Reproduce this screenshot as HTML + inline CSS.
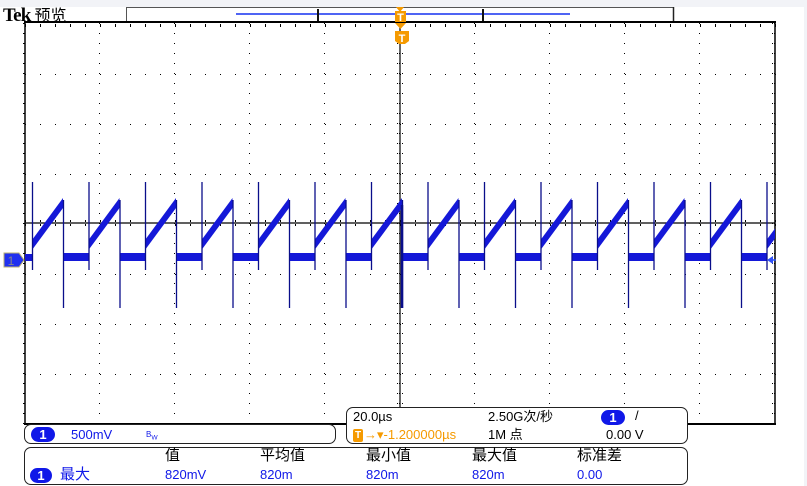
<!DOCTYPE html>
<html><head><meta charset="utf-8"><style>
html,body{margin:0;padding:0;}
body{width:807px;height:486px;background:#fff;position:relative;overflow:hidden;font-family:"Liberation Sans","Noto Sans CJK SC",sans-serif;}
.t{position:absolute;font-size:14px;line-height:16px;white-space:nowrap;}
.box{position:absolute;border:1.5px solid #222;border-radius:7px;background:#fff;box-sizing:border-box;}
.c1{position:absolute;width:24px;height:15px;border-radius:8px;background:#1018e8;color:#fff;font-size:13px;line-height:15px;text-align:center;font-weight:bold;}
</style></head><body>
<div style="position:absolute;left:0;top:0;width:807px;height:7px;background:#f2f3f7"></div>
<div style="position:absolute;left:804px;top:0;width:3px;height:486px;background:#f2f3f7"></div>
<div class="t" style="left:3px;top:4px;font-family:'Liberation Serif','Noto Serif CJK SC',serif;font-size:19px;line-height:20px;font-weight:bold;letter-spacing:-0.8px">Tek <span style="font-weight:normal;font-family:'Noto Sans CJK SC',sans-serif;font-size:16px;letter-spacing:0">预览</span></div>
<svg id="s" width="807" height="486" style="position:absolute;left:0;top:0"></svg>
<div class="box" style="left:24px;top:424px;width:312px;height:20px"></div>
<div class="c1" style="left:31px;top:427px">1</div>
<div class="t" style="left:71px;top:427px;color:#1018e8;font-size:13px">500mV</div>
<div class="t" style="left:146px;top:427px;color:#1018e8;font-size:8px">B<sub>W</sub></div>
<div class="box" style="left:346px;top:407px;width:342px;height:37px"></div>
<div class="t" style="left:353px;top:409px;font-size:13px">20.0µs</div>
<div class="t" style="left:488px;top:409px;font-size:13px">2.50G次/秒</div>
<div class="c1" style="left:601px;top:410px">1</div>
<div class="t" style="left:635px;top:408px;font-size:13px">/</div>
<div style="position:absolute;left:353px;top:429px;width:10px;height:13px;background:#f59a00;border-radius:2px;color:#fff;font-size:10px;line-height:13px;text-align:center;font-weight:bold">T</div>
<div class="t" style="left:364px;top:427px;color:#f59a00;font-size:13px">→▾-1.200000µs</div>
<div class="t" style="left:488px;top:427px;font-size:13px">1M 点</div>
<div class="t" style="left:606px;top:427px;font-size:13px">0.00 V</div>
<div class="box" style="left:24px;top:447px;width:664px;height:38px"></div>
<div class="t" style="left:165px;top:448px;font-size:15px">值</div>
<div class="t" style="left:260px;top:448px;font-size:15px">平均值</div>
<div class="t" style="left:366px;top:448px;font-size:15px">最小值</div>
<div class="t" style="left:472px;top:448px;font-size:15px">最大值</div>
<div class="t" style="left:577px;top:448px;font-size:15px">标准差</div>
<div class="c1" style="left:30px;top:468px;width:22px">1</div>
<div class="t" style="left:60px;top:467px;color:#1018e8;font-size:15px">最大</div>
<div class="t" style="left:165px;top:467px;color:#1018e8;font-size:13px">820mV</div>
<div class="t" style="left:260px;top:467px;color:#1018e8;font-size:13px">820m</div>
<div class="t" style="left:366px;top:467px;color:#1018e8;font-size:13px">820m</div>
<div class="t" style="left:472px;top:467px;color:#1018e8;font-size:13px">820m</div>
<div class="t" style="left:577px;top:467px;color:#1018e8;font-size:13px">0.00</div>
<script>
var s=document.getElementById('s'),h='';
function L(x1,y1,x2,y2,c,w){h+='<line x1="'+x1+'" y1="'+y1+'" x2="'+x2+'" y2="'+y2+'" stroke="'+c+'" stroke-width="'+w+'"/>';}
function R(x,y,w,hh,c){h+='<rect x="'+x+'" y="'+y+'" width="'+w+'" height="'+hh+'" fill="'+c+'"/>';}
R(126,7,548,15,'#fff');L(126,7.5,674,7.5,'#555',1);L(126.5,7,126.5,22,'#555',1);L(673.5,7,673.5,22,'#222',1.5);
L(236,14,570,14,'#1530f0',1.5);L(318,9,318,21,'#111',2);L(483,9,483,21,'#111',2);
for(var x=25;x<=775;x+=15)for(var y=23;y<=423;y+=50)R(x,y+1,1,1,'#000');
for(var X=25;X<=775;X+=75)for(var y=23;y<=423;y+=10)R(X-1,y,1,1,'#000');
for(var x=25;x<=775;x+=15){R(x,24,1,3,'#000');R(x,220,1,2,'#000');R(x,224,1,2,'#000');}
for(var y=23;y<=423;y+=10){R(23,y,1,1,'#000');R(772,y,1,1,'#000');R(397,y,1,1,'#000');R(402,y,1,1,'#000');}
L(25,22,25,424,'#000',1.5);L(775,22,775,424,'#000',1.5);L(24,22,776,22,'#000',2);L(24,424,776,424,'#000',2);
L(25,223,775,223,'#000',1.2);L(400,23,400,424,'#000',1.2);
var P=56.5,c='#1418d8',d='#0a0e8a';
R(25,254,7,7,c);
for(var k=0;k<14;k++){var xr=32+P*k,xf=xr+31;if(xr>775)break;
 var xe=Math.min(xf,775);
 h+='<polygon points="'+xr+',240 '+xe+','+(240-42*(xe-xr)/31)+' '+xe+','+(250-42*(xe-xr)/31)+' '+xr+',250" fill="'+c+'"/>';
 L(xr+0.5,182,xr+0.5,270,d,1.3);
 if(xf<775){L(xf+0.5,200,xf+0.5,308,d,1.3);var xn=Math.min(xr+P,775);R(xf+1,253,xn-xf-1,8,c);}
}
L(402,205,402,308,d,2.5);
h+='<polygon points="396,7 404,7 400,12" fill="#f59a00"/>';R(395,11,11,11,'#f59a00');
h+='<text x="400.5" y="21" font-size="11" fill="#fff" text-anchor="middle" font-weight="bold" font-family="Liberation Sans">T</text>';
h+='<polygon points="395,23 406,23 400.5,29" fill="#f59a00"/>';
h+='<path d="M395,31 h14 v10 l-4,3 h-6 l-4,-3z" fill="#f59a00"/>';
h+='<text x="402" y="42" font-size="11" fill="#fff" text-anchor="middle" font-weight="bold" font-family="Liberation Sans">T</text>';
h+='<path d="M4,253 h15 l5,7 l-5,7 h-15z" fill="#2030f0" stroke="#b8b070" stroke-width="1"/>';
h+='<text x="11" y="265" font-size="12" fill="#888" text-anchor="middle" font-family="Liberation Sans">1</text>';
h+='<polygon points="767,260 773,256 773,264" fill="#3050f8"/>';L(770,260,776,260,'#3050f8',1.5);
s.innerHTML=h;
</script>
</body></html>
